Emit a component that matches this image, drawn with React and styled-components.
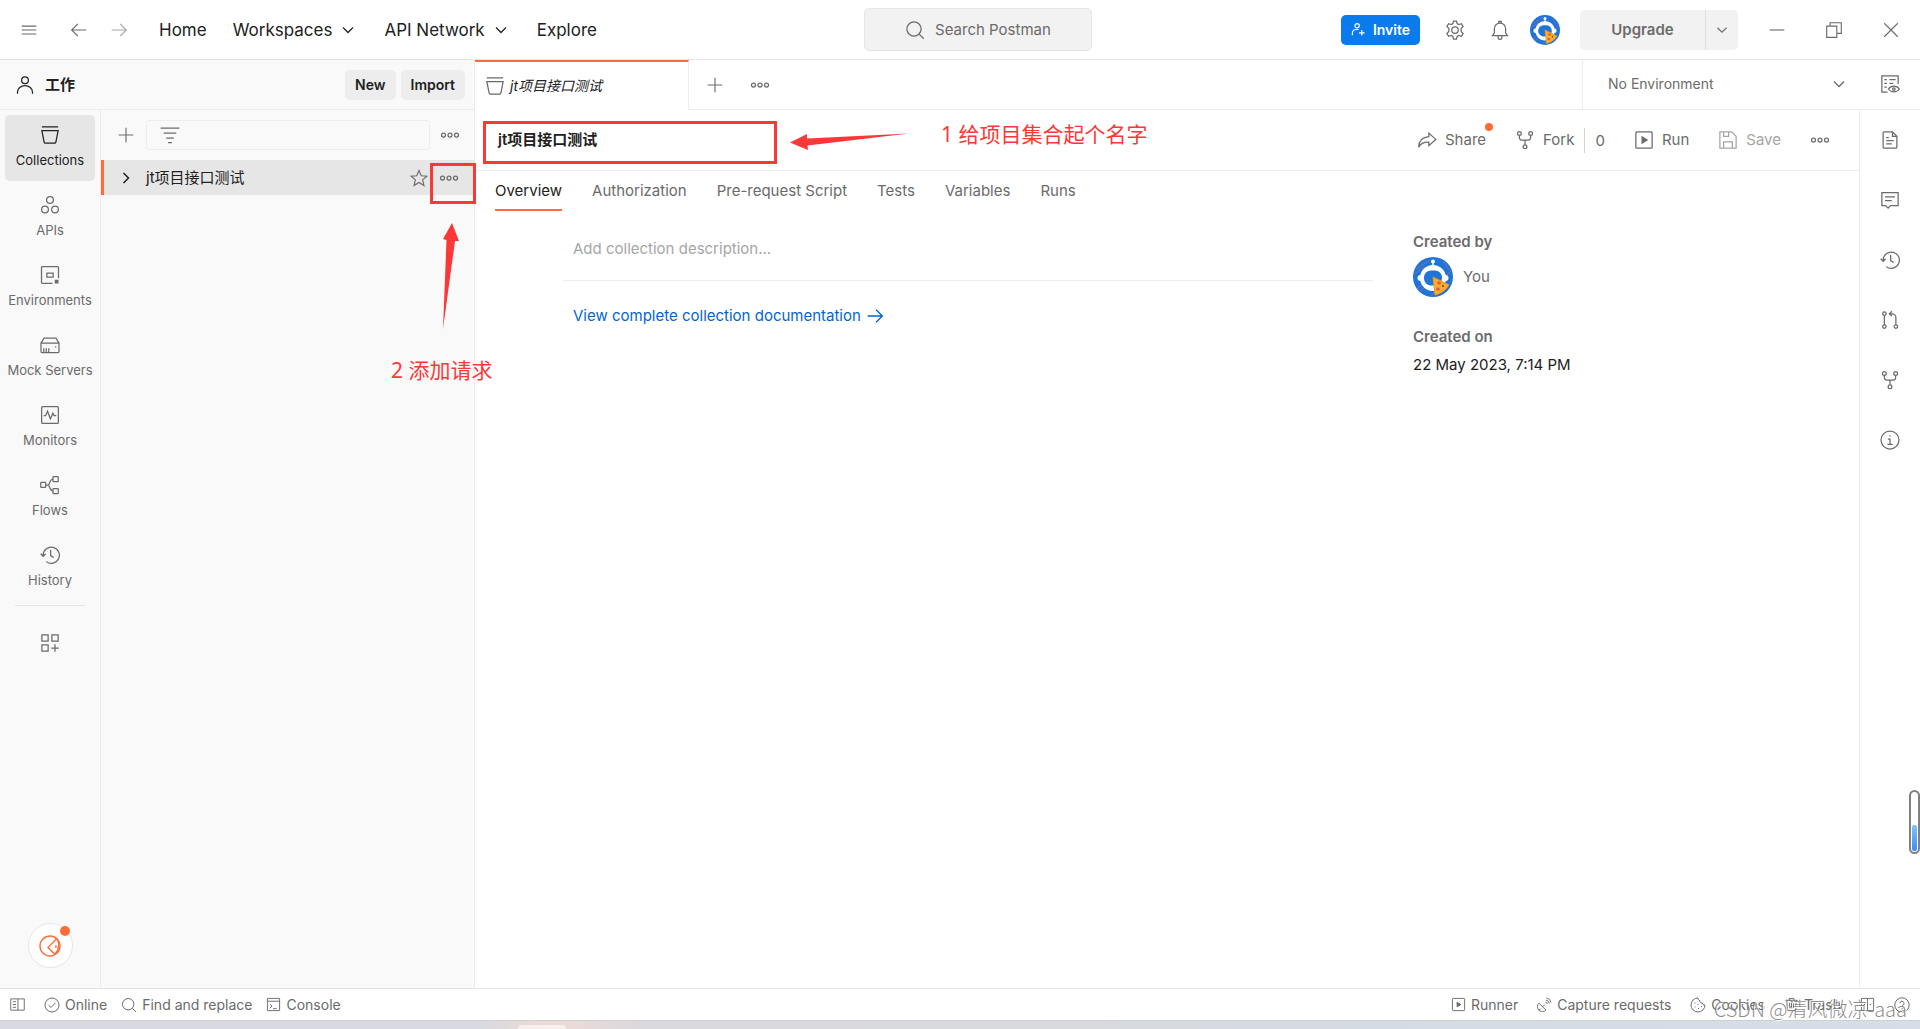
import React from "react";
import styled, { createGlobalStyle } from "styled-components";

const GlobalStyle = createGlobalStyle`
  * {
    box-sizing: border-box;
  }
  body {
    margin: 0;
    background: #ffffff;
    color: #212121;
    font-family: Inter, "Noto Sans CJK SC", sans-serif;
    font-size: 15px;
    line-height: 20px;
  }
  button, input, select {
    font: inherit;
    color: inherit;
    margin: 0;
    padding: 0;
    border: none;
    background: none;
    outline: none;
  }
  button {
    cursor: pointer;
  }
  h1, h2, p {
    margin: 0;
  }
`;

const Page = styled.div`
  position: relative;
  display: flex;
  flex-direction: column;
  min-height: 100vh;
  overflow: hidden;
`;

/* ---------- icons ---------- */

const Svg = styled.svg`
  flex: none;
  display: block;
  width: ${props => props.$size || 20}px;
  height: ${props => props.$size || 20}px;
  fill: none;
  stroke: currentColor;
  stroke-width: ${props => props.$weight || 1};
`;

const shapes = {
  menu: <path d="M1.5 4.5h13M1.5 8h13M1.5 11.5h13" />,
  back: <path d="M14.5 8h-13M7 2.5L1.5 8 7 13.5" />,
  forward: <path d="M1.5 8h13M9 2.5L14.5 8 9 13.5" />,
  down: <path d="M4 6l4 4 4-4" />,
  right: <path d="M6 4l4 4-4 4" />,
  search: (
    <g>
      <circle cx="7.2" cy="7.2" r="5.7" />
      <path d="M11.3 11.3L15 15" />
    </g>
  ),
  invite: (
    <g>
      <circle cx="6.5" cy="4" r="2.3" />
      <path d="M1.5 14v-2.5a4 4 0 0 1 4-3.5H8M11.5 8.5v6M8.5 11.5h6" />
    </g>
  ),
  gear: (
    <g>
      <circle cx="8" cy="8" r="2.6" />
      <path d="M6.8.8h2.4l.5 2 1.4.8 2-.6 1.4 2.2-1.6 1.6v2.4l1.6 1.6-1.4 2.2-2-.6-1.4.8-.5 2H6.8l-.5-2-1.4-.8-2 .6-1.4-2.2 1.6-1.6V6.800L1.500 5.200l1.400-2.200 2 .6 1.400-.8z" />
    </g>
  ),
  bell: (
    <g>
      <path d="M2 12.5h12l-1.500-2V7a4.500 4.500 0 0 0-9 0v3.500z" />
      <path d="M7 2.500v-1.500h2v1.500M6.500 12.500V14a1.500 1.500 0 0 0 3 0v-1.500" />
    </g>
  ),
  minimize: <path d="M1.5 8h13" />,
  restore: <path d="M1.500 4.500h9v10h-9zM4.500 4.500v-3h10v9.500h-4" />,
  close: <path d="M2 2l12 12M14 2L2 14" />,
  user: (
    <g>
      <circle cx="8" cy="4.2" r="2.7" />
      <path d="M2 15v-1.5a6 5 0 0 1 12 0V15" />
    </g>
  ),
  collection: (
    <path d="M1.500 1.500h13M1.500 4.500h13l-1.800 9.200a1 1 0 0 1-1 .8H4.300a1 1 0 0 1-1-.8z" />
  ),
  api: (
    <g>
      <circle cx="8" cy="4" r="2.7" />
      <circle cx="4" cy="11.5" r="2.7" />
      <circle cx="12" cy="11.5" r="2.7" />
    </g>
  ),
  environment: (
    <g>
      <path d="M10 14.700H2a.8.8 0 0 1-.8-.8V2a.8.8 0 0 1 .8-.8h12a.8.8 0 0 1 .8.8v8.500" />
      <path d="M5.500 6.500h5v3.200h-5z" />
      <path d="M12.300 12.300h2v2h-2z" fill="currentColor" />
    </g>
  ),
  mock: (
    <g>
      <path d="M.8 6.500h14.400v6.700a.8.8 0 0 1-.8.8H1.600a.8.8 0 0 1-.8-.8zM.8 6.500l2.400-4h9.600l2.400 4" />
      <path d="M3 14v-3.500M5 14v-3.500M7 14v-3.500M12 9.500h1" />
    </g>
  ),
  monitor: (
    <g>
      <rect x="1.3" y="1.3" width="13.4" height="13.4" rx=".8" />
      <path d="M3 8.500h1.500L6 5l2.300 6 2-4.500 1 2H13" />
    </g>
  ),
  flow: (
    <g>
      <rect x=".6" y="5.9" width="4" height="4" rx=".5" />
      <rect x="10.4" y="1.2" width="4.2" height="4" rx=".5" />
      <rect x="10.4" y="10.8" width="4.2" height="4" rx=".5" />
      <path d="M4.600 8h2.400M10.400 3.200C7.500 3.400 7.800 8 6.500 8c1.300 0 1 4.600 3.900 4.800" />
    </g>
  ),
  history: <path d="M2.500 8a6.500 6.500 0 1 1 2.500 5.300M.5 7l2 2 2-2M8.500 4v4.500l2.500 1.500" />,
  grid: <path d="M1.500 1.500h5v5h-5zM9.500 1.500h5v5h-5zM1.500 9.500h5v5h-5zM12 9v6M9 12h6" />,
  bootcamp: (
    <g>
      <circle cx="8" cy="8" r="7.3" />
      <path d="M13 2.500L6.500 9l5 5M12.300 7.500v2M13 2.500c2 3 2 8-1.500 11.500" />
    </g>
  ),
  plus: <path d="M8 1.500v13M1.500 8h13" />,
  filter: <path d="M.5 2.500h15M3 6.500h10M5 10.500h6M6.500 14h3" />,
  dots: (
    <g>
      <circle cx="2.8" cy="8" r="1.6" />
      <circle cx="8" cy="8" r="1.6" />
      <circle cx="13.2" cy="8" r="1.6" />
    </g>
  ),
  star: <path d="M8 1.300l2 4.700 5 .4-3.800 3.300 1.200 5L8 12l-4.400 2.700 1.200-5L1 6.400 6 6z" />,
  eyeTable: (
    <g>
      <path d="M6 14.500H1.500v-13h13V8M3.500 4.500h2M7.500 4.500h5M3.500 7.500h2M7.500 7.500h3M3.500 10.500h2" />
      <path d="M6.700 12c2.200-3 6.600-3 8.800 0-2.200 3-6.600 3-8.800 0z" />
      <circle cx="11.1" cy="12" r="1" />
    </g>
  ),
  share: (
    <path d="M9.500 2.500l5.500 5-5.500 5V9.700C5.500 9.500 3 10.500 1.300 13.800 1.500 9 4 5.700 9.500 5.300z" />
  ),
  fork: (
    <g>
      <circle cx="3.5" cy="2.8" r="1.5" />
      <circle cx="12.5" cy="2.8" r="1.5" />
      <circle cx="8" cy="13.3" r="1.5" />
      <path d="M3.500 4.300V6a2 2 0 0 0 2 2h5a2 2 0 0 0 2-2V4.300M8 8v3.800" />
    </g>
  ),
  run: (
    <g>
      <rect x="1.5" y="1.5" width="13" height="13" rx=".8" />
      <path d="M6.500 5.500v5l4-2.500z" fill="currentColor" />
    </g>
  ),
  save: <path d="M1.500 1.500h9.500l3.500 3.500v9.500h-13zM4.500 1.500V5h4V1.500M4.500 14.500v-5h7v5" />,
  doc: (
    <path d="M10 1.500H3.500a1 1 0 0 0-1 1v11a1 1 0 0 0 1 1h9a1 1 0 0 0 1-1V5zM10 1.500V5h3.500M5 6h2M5 8.500h6M5 11h4.500" />
  ),
  comment: <path d="M1.500 2h13v10.500h-6l-2 2-2-2h-3zM4 5.500h8M4 8.500h5.500" />,
  pull: (
    <g>
      <circle cx="3.5" cy="2.9" r="1.4" />
      <circle cx="3.5" cy="13.2" r="1.4" />
      <circle cx="12.7" cy="13.2" r="1.4" />
      <path d="M3.500 4.300v7.500M12.700 11.800V6a3 3 0 0 0-3-3H7.500M9.500 1l-2 2 2 2" />
    </g>
  ),
  info: (
    <g>
      <circle cx="8" cy="8" r="7.2" />
      <path d="M6.300 7.300H8v4M6 11.500h4.200M7.500 4.700h1" />
    </g>
  ),
  panels: <path d="M.8 2h14.400v12H.8zM8.500 2v12M3 5h3.500M3 8h3.500M3 11h3.500" />,
  online: (
    <g>
      <circle cx="8" cy="8" r="7" />
      <path d="M4.500 8.200L7 10.500l4.500-4.700" />
    </g>
  ),
  console: (
    <path d="M1.500 1.500h13v13h-13zM1.500 4.500h13M4 7.500l2.500 2.200L4 12M7.500 12.500h4" />
  ),
  capture: (
    <path d="M2 6.500a5.300 5.300 0 0 0 7.500 7.500zM6 10.500L8.500 8M3.500 12.500L2 15M9 5.500a2 2 0 0 1 2 2M9.500 3.300A4 4 0 0 1 13 7M10 1a6 6 0 0 1 5 5" />
  ),
  cookie: (
    <g>
      <path d="M8 1a7 7 0 1 0 7 7c-1.500.3-2.500-.5-2.500-2-2 .2-3-.8-2.700-2.500C8.500 3.500 8 2.500 8 1z" />
      <path d="M4.500 6h1M7.500 7.500h1M4.500 10h1M8 11.500h1M11 9.500h1" />
    </g>
  ),
  trash: <path d="M1.500 3.500h13M5.500 3.500v-2h5v2M3 3.500l.5 11h9l.5-11M6 6v6M8 6v6M10 6v6" />,
  split: <path d="M1.500 1.500h13v13h-13zM8 1.500v13M4 8h1.500M10.500 8H12" />,
  help: (
    <g>
      <circle cx="8" cy="8" r="7.2" />
      <path d="M6 6.200a2 2 0 1 1 3 1.800c-.8.500-1 .8-1 1.700M8 11v1.200" />
    </g>
  )
};

function Icon({ name, size, weight }) {
  return (
    <Svg viewBox="0 0 16 16" $size={size} $weight={weight} aria-hidden="true">
      {shapes[name]}
    </Svg>
  );
}

function Avatar({ size }) {
  return (
    <Svg viewBox="0 0 40 40" $size={size} role="img" aria-label="Avatar">
      <circle cx="20" cy="20" r="20" fill="#1f74d8" stroke="none" />
      <path
        d="M3 12L17 3M1 17l11-7M30 4l6 9M33 19l6-6M4 32l6-5M6 35l6-5M18 39l5-5"
        stroke="#8b6ba8"
      />
      <circle cx="20" cy="4.5" r="2" fill="#ffffff" stroke="none" />
      <path d="M20 5v4" stroke="#ffffff" strokeWidth="1.5" />
      <circle cx="20" cy="21" r="13" fill="#ffffff" stroke="none" />
      <rect x="4.500" y="18" width="31" height="6" rx="3" fill="#ffffff" stroke="none" />
      <rect x="11" y="13.500" width="18" height="15" rx="7" fill="#1f74d8" stroke="none" />
      <path d="M20 20l16 8q-5 8-14 10z" fill="#fbae2c" stroke="#e8952a" />
      <circle cx="26" cy="26" r="1.8" fill="#f0553a" stroke="none" />
      <circle cx="25" cy="32" r="1.8" fill="#f0553a" stroke="none" />
      <circle cx="30" cy="29" r="1" fill="#6b3b1a" stroke="none" />
    </Svg>
  );
}

/* ---------- header ---------- */

const Header = styled.header`
  display: flex;
  align-items: center;
  height: 60px;
  padding: 0 19px;
  border-bottom: 1px solid #e6e6e6;
`;

const IconButton = styled.button`
  flex: none;
  display: flex;
  align-items: center;
  justify-content: center;
  width: ${props => props.$width || 20}px;
  height: 20px;
  color: ${props => props.$color || "#6b6b6b"};
`;

const History = styled.div`
  display: flex;
  gap: 20px;
  margin: 0 30px;
`;

const Nav = styled.nav`
  display: flex;
  gap: 26px;
  padding-right: 18px;
`;

const NavLink = styled.a`
  display: flex;
  align-items: center;
  gap: 6px;
  color: #212121;
  font-size: 17px;
  text-decoration: none;
`;

const SearchButton = styled.button`
  display: flex;
  align-items: center;
  justify-content: center;
  gap: 10px;
  width: 228px;
  height: 43px;
  margin: 0 auto;
  border: 1px solid #e6e6e6;
  border-radius: 5px;
  background: #f2f2f2;
  color: #6b6b6b;
`;

const HeaderActions = styled.div`
  display: flex;
  align-items: center;
  gap: 20px;
`;

const HeaderIcons = styled.div`
  display: flex;
  gap: 25px;
  padding-left: 5px;
`;

const InviteButton = styled.button`
  display: flex;
  align-items: center;
  justify-content: center;
  gap: 7px;
  width: 79px;
  height: 30px;
  border-radius: 5px;
  background: #097bed;
  color: #ffffff;
  font-size: 14px;
  font-weight: 600;
`;

const UpgradeGroup = styled.div`
  display: flex;
  height: 40px;
  border-radius: 5px;
  background: #f2f2f2;
  color: #6b6b6b;
`;

const UpgradeButton = styled.button`
  width: ${props => (props.$menu ? 33 : 125)}px;
  display: flex;
  align-items: center;
  justify-content: center;
  border-left: ${props => (props.$menu ? "1px solid #e0e0e0" : "none")};
  font-weight: 600;
`;

const WindowControls = styled.div`
  display: flex;
  gap: 37px;
  padding-left: 9px;
`;

/* ---------- columns ---------- */

const Body = styled.div`
  flex: 1;
  display: flex;
`;

const Side = styled.aside`
  flex: none;
  display: flex;
  flex-direction: column;
  width: 475px;
  border-right: 1px solid #ededed;
  background: #f9f9f9;
`;

const WorkspaceBar = styled.div`
  display: flex;
  align-items: center;
  gap: 5px;
  height: 50px;
  padding: 0 9px 0 15px;
  border-bottom: 1px solid #ededed;
`;

const WorkspaceName = styled.h1`
  flex: 1;
  padding-left: 5px;
  font-size: 15px;
  font-weight: 600;
`;

const SmallButton = styled.button`
  height: 30px;
  padding: 0 10px;
  border-radius: 5px;
  background: #ededed;
  font-size: 14px;
  font-weight: 600;
`;

const SideBody = styled.div`
  flex: 1;
  display: flex;
`;

const Rail = styled.nav`
  flex: none;
  display: flex;
  flex-direction: column;
  align-items: center;
  gap: 4px;
  width: 101px;
  padding: 5px 5px 20px;
  border-right: 1px solid #ededed;
`;

const RailItem = styled.button`
  display: flex;
  flex-direction: column;
  align-items: center;
  gap: 5px;
  width: 90px;
  height: 66px;
  padding-top: 10px;
  border-radius: 5px;
  background: ${props => (props.$active ? "#e6e6e6" : "transparent")};
  color: ${props => (props.$active ? "#212121" : "#6b6b6b")};
  font-size: 13px;
  white-space: nowrap;
`;

const RailDivider = styled.hr`
  width: 70px;
  margin: 0 0 23px;
  border: none;
  border-top: 1px solid #e6e6e6;
`;

const Bootcamp = styled.button`
  position: relative;
  display: flex;
  align-items: center;
  justify-content: center;
  width: 45px;
  height: 45px;
  margin-top: auto;
  border: 1px solid #e6e6e6;
  border-radius: 50%;
  background: #ffffff;
  color: #ff6c37;
`;

const Dot = styled.span`
  position: absolute;
  top: ${props => props.$top}px;
  right: ${props => props.$right}px;
  width: ${props => props.$size}px;
  height: ${props => props.$size}px;
  border-radius: 50%;
  background: #ff6c37;
`;

const Explorer = styled.div`
  flex: 1;
  display: flex;
  flex-direction: column;
  min-width: 0;
`;

const ExplorerTools = styled.div`
  display: flex;
  align-items: center;
  gap: 10px;
  height: 50px;
  padding: 0 14px 0 15px;
`;

const FilterBox = styled.label`
  flex: 1;
  display: flex;
  align-items: center;
  gap: 10px;
  min-width: 0;
  height: 30px;
  padding: 0 13px;
  border: 1px solid #ededed;
  border-radius: 3px;
  color: #6b6b6b;

  input {
    flex: 1;
    min-width: 0;
  }
`;

const TreeRow = styled.div`
  display: flex;
  align-items: center;
  gap: 10px;
  height: 35px;
  padding: 0 15px 0 12px;
  border-left: 3px solid #ff6c37;
  background: #e6e6e6;
`;

const TreeName = styled.span`
  flex: 1;
`;

const Main = styled.main`
  flex: 1;
  display: flex;
  flex-direction: column;
  min-width: 0;
`;

const TabBar = styled.div`
  display: flex;
  height: 50px;
`;

const OpenTab = styled.button`
  display: flex;
  align-items: center;
  gap: 5px;
  width: 214px;
  padding: 0 10px;
  border-top: 2px solid #ff6c37;
  border-right: 1px solid #ededed;
  font-size: 14px;
  font-style: italic;

  svg {
    color: #6b6b6b;
  }
`;

const TabTools = styled.div`
  flex: 1;
  display: flex;
  align-items: center;
  gap: 25px;
  padding-left: 16px;
  border-bottom: 1px solid #ededed;
`;

const EnvironmentBox = styled.label`
  display: flex;
  align-items: center;
  width: 278px;
  padding: 0 11px 2px 25px;
  border-left: 1px solid #ededed;
  border-bottom: 1px solid #ededed;
  color: #6b6b6b;
  font-size: 14px;

  select {
    flex: 1;
    appearance: none;
  }
`;

const QuickLook = styled.div`
  display: flex;
  align-items: center;
  justify-content: center;
  width: 60px;
  padding-bottom: 2px;
  border-bottom: 1px solid #ededed;
`;

const Workbench = styled.div`
  flex: 1;
  display: flex;
`;

const Content = styled.div`
  flex: 1;
  min-width: 0;
`;

const TitleBar = styled.div`
  display: flex;
  align-items: center;
  height: 61px;
  padding: 0 29px 0 23px;
  border-bottom: 1px solid #ededed;
`;

const Title = styled.h2`
  flex: 1;
  font-size: 15px;
  font-weight: 600;
`;

const Actions = styled.div`
  display: flex;
  align-items: center;
  gap: 29px;
`;

const Action = styled.button`
  position: relative;
  display: flex;
  align-items: center;
  gap: 8px;
  color: ${props => (props.disabled ? "#a6a6a6" : "#6b6b6b")};
`;

const ForkGroup = styled.div`
  display: flex;
  align-items: center;
  gap: 10px;
`;

const ForkCount = styled.span`
  height: 25px;
  padding-left: 10px;
  border-left: 1px solid #d4d4d4;
  color: #6b6b6b;
  line-height: 25px;
`;

const Tabs = styled.nav`
  display: flex;
  gap: 30px;
  padding: 0 20px;
`;

const Tab = styled.button`
  height: 40px;
  padding-top: 2px;
  border-bottom: 2px solid ${props => (props.$active ? "#ff6c37" : "transparent")};
  color: ${props => (props.$active ? "#212121" : "#6b6b6b")};
`;

const Overview = styled.div`
  display: flex;
  gap: 40px;
  padding: 21px 0 0 88px;
`;

const Description = styled.div`
  flex: 1;

  input {
    display: block;
    width: 100%;
    height: 49px;
    padding: 0 10px 15px;
    border-bottom: 1px solid #ededed;
  }
  input::placeholder {
    color: #a6a6a6;
    opacity: 1;
  }
`;

const DocLink = styled.a`
  display: flex;
  align-items: center;
  gap: 5px;
  padding: 25px 10px;
  color: #0265d2;
  text-decoration: none;
`;

const Details = styled.dl`
  width: 446px;
  margin: 0;

  dt {
    padding-bottom: 5px;
    color: #6b6b6b;
    font-weight: 600;
  }
  dd {
    display: flex;
    align-items: center;
    gap: 10px;
    margin: 0 0 30px;
  }
`;

const Owner = styled.span`
  color: #6b6b6b;
`;

const DateText = styled.span`
  padding-top: 3px;
`;

const ContextBar = styled.nav`
  display: flex;
  flex-direction: column;
  align-items: center;
  gap: 40px;
  width: 61px;
  padding-top: 20px;
  border-left: 1px solid #ededed;
`;

const StatusBar = styled.footer`
  display: flex;
  align-items: center;
  justify-content: space-between;
  height: 32px;
  padding: 0 10px;
  border-top: 1px solid #e6e6e6;
`;

const StatusGroup = styled.div`
  display: flex;
  align-items: center;
  gap: ${props => props.$gap}px;
`;

const StatusItem = styled.button`
  display: flex;
  align-items: center;
  gap: 5px;
  padding-right: ${props => (props.$toggle ? 5 : 0)}px;
  color: #6b6b6b;
  font-size: 14px;
`;

const Desktop = styled.div`
  height: 9px;
  border-top: 1px solid #cfcfd2;
  background: linear-gradient(
    90deg,
    #d9dae1 0,
    #d9dae1 480px,
    #eedbd5 550px,
    #d9d9df 650px,
    #d9dadd 1000px,
    #d4dce6 1500px,
    #d6dfe9 100%
  );
`;

const DesktopTab = styled.div`
  width: 48px;
  height: 4px;
  margin: 4px 0 0 518px;
  border-radius: 4px 4px 0 0;
  background: #f8efec;
`;

/* ---------- notes drawn over the window ---------- */

const Frame = styled.div`
  position: absolute;
  left: ${props => props.$x}px;
  top: ${props => props.$y}px;
  width: ${props => props.$w}px;
  height: ${props => props.$h}px;
  border: 3px solid #fb3838;
  pointer-events: none;
`;

const Note = styled.p`
  position: absolute;
  left: ${props => props.$x}px;
  top: ${props => props.$y}px;
  color: #fb3838;
  font-family: "Noto Sans", "Noto Sans CJK SC", sans-serif;
  font-size: 21px;
  line-height: 30px;
  white-space: nowrap;
`;

const Arrow = styled.svg`
  position: absolute;
  left: ${props => props.$x}px;
  top: ${props => props.$y}px;
  fill: #fb3838;
  pointer-events: none;
`;

const Gauge = styled.div`
  position: absolute;
  right: 0;
  bottom: 175px;
  display: flex;
  align-items: flex-end;
  width: 11px;
  height: 64px;
  padding: 1px;
  border: 2px solid #808080;
  border-radius: 6px;
  background: #ffffff;
`;

const GaugeLevel = styled.div`
  width: 100%;
  height: 26px;
  border-radius: 2px;
  background: linear-gradient(#7cc6fb, #3b8cf8);
`;

const Watermark = styled.span`
  position: absolute;
  right: 13px;
  bottom: 6px;
  color: rgba(110, 110, 110, 0.8);
  font-family: "Noto Sans CJK SC", sans-serif;
  font-size: 20px;
  line-height: 28px;
  font-weight: 300;
  text-shadow: 1px 1px 0 #ffffff;
  white-space: nowrap;
  pointer-events: none;
`;

const railItems = [
  ["collection", "Collections"],
  ["api", "APIs"],
  ["environment", "Environments"],
  ["mock", "Mock Servers"],
  ["monitor", "Monitors"],
  ["flow", "Flows"],
  ["history", "History"]
];

const tabs = ["Overview", "Authorization", "Pre-request Script", "Tests", "Variables", "Runs"];

const contextItems = [
  ["doc", "Documentation"],
  ["comment", "Comments"],
  ["history", "Changelog"],
  ["pull", "Pull requests"],
  ["fork", "Forks"],
  ["info", "Info"]
];

function TopBar() {
  return (
    <Header>
      <IconButton aria-label="Menu">
        <Icon name="menu" size={18} />
      </IconButton>
      <History>
        <IconButton aria-label="Back">
          <Icon name="back" size={18} />
        </IconButton>
        <IconButton aria-label="Forward" $color="#a6a6a6">
          <Icon name="forward" size={18} />
        </IconButton>
      </History>
      <Nav>
        <NavLink href="#home">Home</NavLink>
        <NavLink href="#workspaces">
          Workspaces <Icon name="down" />
        </NavLink>
        <NavLink href="#network">
          API Network <Icon name="down" />
        </NavLink>
        <NavLink href="#explore">Explore</NavLink>
      </Nav>
      <SearchButton>
        <Icon name="search" />
        Search Postman
      </SearchButton>
      <HeaderActions>
        <InviteButton>
          <Icon name="invite" size={15} weight={1.3} />
          Invite
        </InviteButton>
        <HeaderIcons>
          <IconButton aria-label="Settings">
            <Icon name="gear" />
          </IconButton>
          <IconButton aria-label="Notifications">
            <Icon name="bell" />
          </IconButton>
        </HeaderIcons>
        <IconButton aria-label="Account" $width={30}>
          <Avatar size={30} />
        </IconButton>
        <UpgradeGroup>
          <UpgradeButton>Upgrade</UpgradeButton>
          <UpgradeButton $menu aria-label="Upgrade options">
            <Icon name="down" size={18} />
          </UpgradeButton>
        </UpgradeGroup>
        <WindowControls>
          <IconButton aria-label="Minimize">
            <Icon name="minimize" size={18} />
          </IconButton>
          <IconButton aria-label="Restore">
            <Icon name="restore" size={18} />
          </IconButton>
          <IconButton aria-label="Close">
            <Icon name="close" size={18} />
          </IconButton>
        </WindowControls>
      </HeaderActions>
    </Header>
  );
}

function Sidebar() {
  return (
    <Side>
      <WorkspaceBar>
        <Icon name="user" />
        <WorkspaceName>工作</WorkspaceName>
        <SmallButton>New</SmallButton>
        <SmallButton>Import</SmallButton>
      </WorkspaceBar>
      <SideBody>
        <Rail>
          {railItems.map(([icon, label], i) => (
            <RailItem key={label} $active={i === 0}>
              <Icon name={icon} />
              {label}
            </RailItem>
          ))}
          <RailDivider />
          <IconButton aria-label="Configure sidebar">
            <Icon name="grid" />
          </IconButton>
          <Bootcamp aria-label="Bootcamp">
            <Icon name="bootcamp" size={22} />
            <Dot $top={2} $right={2} $size={10} />
          </Bootcamp>
        </Rail>
        <Explorer>
          <ExplorerTools>
            <IconButton aria-label="Add collection">
              <Icon name="plus" size={18} />
            </IconButton>
            <FilterBox>
              <Icon name="filter" />
              <input type="text" aria-label="Filter collections" />
            </FilterBox>
            <IconButton aria-label="More">
              <Icon name="dots" />
            </IconButton>
          </ExplorerTools>
          <TreeRow>
            <IconButton aria-label="Expand" $color="#212121">
              <Icon name="right" weight={1.2} />
            </IconButton>
            <TreeName>jt项目接口测试</TreeName>
            <IconButton aria-label="Star">
              <Icon name="star" size={18} />
            </IconButton>
            <IconButton aria-label="View more actions">
              <Icon name="dots" />
            </IconButton>
          </TreeRow>
        </Explorer>
      </SideBody>
    </Side>
  );
}

function Collection() {
  return (
    <Content>
      <TitleBar>
        <Title>jt项目接口测试</Title>
        <Actions>
          <Action>
            <Icon name="share" />
            Share
            <Dot $top={-7} $right={-7} $size={8} />
          </Action>
          <ForkGroup>
            <Action>
              <Icon name="fork" />
              Fork
            </Action>
            <ForkCount>0</ForkCount>
          </ForkGroup>
          <Action>
            <Icon name="run" />
            Run
          </Action>
          <Action disabled>
            <Icon name="save" />
            Save
          </Action>
          <IconButton aria-label="More actions">
            <Icon name="dots" />
          </IconButton>
        </Actions>
      </TitleBar>
      <Tabs>
        {tabs.map(tab => (
          <Tab key={tab} $active={tab === "Overview"}>
            {tab}
          </Tab>
        ))}
      </Tabs>
      <Overview>
        <Description>
          <input aria-label="Description" placeholder="Add collection description..." />
          <DocLink href="#documentation">
            View complete collection documentation
            <Icon name="forward" size={18} weight={1.2} />
          </DocLink>
        </Description>
        <Details>
          <dt>Created by</dt>
          <dd>
            <Avatar size={40} />
            <Owner>You</Owner>
          </dd>
          <dt>Created on</dt>
          <dd>
            <DateText>22 May 2023, 7:14 PM</DateText>
          </dd>
        </Details>
      </Overview>
    </Content>
  );
}

function Footer() {
  return (
    <StatusBar>
      <StatusGroup $gap={14}>
        <StatusItem $toggle aria-label="Toggle sidebar">
          <Icon name="panels" size={15} />
        </StatusItem>
        <StatusItem>
          <Icon name="online" size={16} />
          Online
        </StatusItem>
        <StatusItem>
          <Icon name="search" size={16} />
          Find and replace
        </StatusItem>
        <StatusItem>
          <Icon name="console" size={15} />
          Console
        </StatusItem>
      </StatusGroup>
      <StatusGroup $gap={19}>
        <StatusItem>
          <Icon name="run" size={15} />
          Runner
        </StatusItem>
        <StatusItem>
          <Icon name="capture" size={15} />
          Capture requests
        </StatusItem>
        <StatusItem>
          <Icon name="cookie" size={16} />
          Cookies
        </StatusItem>
        <StatusItem>
          <Icon name="trash" size={15} />
          Trash
        </StatusItem>
        <StatusItem aria-label="Two pane view">
          <Icon name="split" size={15} />
        </StatusItem>
        <StatusItem aria-label="Help">
          <Icon name="help" size={16} />
        </StatusItem>
      </StatusGroup>
    </StatusBar>
  );
}

class App extends React.Component {
  render() {
    return (
      <Page>
        <GlobalStyle />
        <TopBar />
        <Body>
          <Sidebar />
          <Main>
            <TabBar>
              <OpenTab>
                <Icon name="collection" />
                jt项目接口测试
              </OpenTab>
              <TabTools>
                <IconButton aria-label="New tab">
                  <Icon name="plus" size={18} />
                </IconButton>
                <IconButton aria-label="Tab options">
                  <Icon name="dots" />
                </IconButton>
              </TabTools>
              <EnvironmentBox>
                <select aria-label="Environment">
                  <option>No Environment</option>
                </select>
                <Icon name="down" />
              </EnvironmentBox>
              <QuickLook>
                <IconButton aria-label="Environment quick look">
                  <Icon name="eyeTable" />
                </IconButton>
              </QuickLook>
            </TabBar>
            <Workbench>
              <Collection />
              <ContextBar>
                {contextItems.map(([icon, label]) => (
                  <IconButton key={label} aria-label={label}>
                    <Icon name={icon} />
                  </IconButton>
                ))}
              </ContextBar>
            </Workbench>
          </Main>
        </Body>
        <Footer />
        <Desktop>
          <DesktopTab />
        </Desktop>

        <Frame $x={483} $y={121} $w={294} $h={43} />
        <Arrow $x={790} $y={132} width="120" height="20" viewBox="0 0 120 20">
          <path d="M0 10.500L17 2v4.500l102-5-101.500 12 .5 4.500z" />
        </Arrow>
        <Note $x={941} $y={119}>1 给项目集合起个名字</Note>
        <Frame $x={430} $y={163} $w={46} $h={41} />
        <Arrow $x={440} $y={223} width="22" height="108" viewBox="0 0 22 108">
          <path d="M12 0l7 18h-4L3 106 6.500 17 3 16z" />
        </Arrow>
        <Note $x={391} $y={355}>2 添加请求</Note>
        <Gauge>
          <GaugeLevel />
        </Gauge>
        <Watermark>CSDN @清风微凉-aaa</Watermark>
      </Page>
    );
  }
}

export default App;
